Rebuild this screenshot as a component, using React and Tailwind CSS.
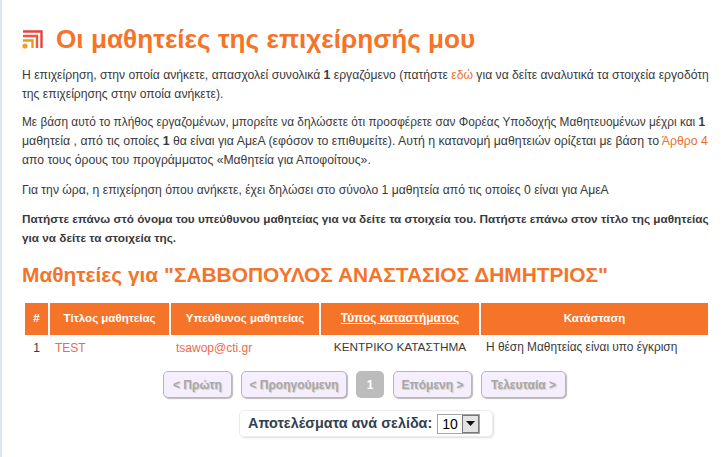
import React from 'react';

const RssIcon = () => (
  <svg width="22" height="20" viewBox="0 0 22 20" className="shrink-0">
    <path d="M1 2.5H19.5V19" fill="none" stroke="#e2453c" strokeWidth="2.4" />
    <path d="M1 7H15V19" fill="none" stroke="#ea5a3a" strokeWidth="2.4" />
    <path d="M1 11.5H10.5V19" fill="none" stroke="#ee9a1e" strokeWidth="2.4" />
    <circle cx="3" cy="17" r="2.6" fill="#f0a01e" />
  </svg>
);

const PageButton = ({ children, className }) => (
  <button className={`h-[27px] rounded-[5px] border border-[#b9b3c6] bg-[#f5eefc] text-xs font-bold text-[#a8a8a8] [text-shadow:1px_1px_1px_#ccc] shadow-[1px_1px_1px_#bbb] ${className}`}>
    {children}
  </button>
);

const headCell = 'bg-[#f5742a] text-white font-bold text-[11.5px] text-center h-8 flex items-center justify-center';

export default function App() {
  return (
    <div className="w-[721px] h-[457px] overflow-hidden bg-white border-l-2 border-[#dfe6ec] font-['Liberation_Sans',Arial,sans-serif] text-xs text-[#3a3a3a]">
      <div className="pl-5 pr-[9px] pt-[22px]">
        <div className="flex items-center gap-3 h-[34px]">
          <RssIcon />
          <h1 className="text-[26.2px] font-bold text-[#f5742a] whitespace-nowrap">Οι μαθητείες της επιχείρησής μου</h1>
        </div>

        <p className="mt-[10px] text-[12.18px] leading-[19px]">
          Η επιχείρηση, στην οποία ανήκετε, απασχολεί συνολικά <b>1</b> εργαζόμενο (πατήστε <span className="text-[#e8702a]">εδώ</span> για να δείτε αναλυτικά τα στοιχεία εργοδότη της επιχείρησης στην οποία ανήκετε).
        </p>
        <p className="mt-[9px] text-[12.2px] leading-[19px]">
          <span className="text-[11.85px]">Με βάση αυτό το πλήθος εργαζομένων, μπορείτε να δηλώσετε ότι προσφέρετε σαν Φορέας Υποδοχής Μαθητευομένων μέχρι και <b>1</b></span><br />
          <span className="text-[12.32px]">μαθητεία , από τις οποίες <b>1</b> θα είναι για ΑμεΑ (εφόσον το επιθυμείτε). Αυτή η κατανομή μαθητειών ορίζεται με βάση το <span className="text-[#e8702a]">Άρθρο 4</span></span><br />
          απο τους όρους του προγράμματος «Μαθητεία για Αποφοίτους».
        </p>
        <p className="mt-[11px] text-[12.18px] leading-[19px]">
          Για την ώρα, η επιχείρηση όπου ανήκετε, έχει δηλώσει στο σύνολο 1 μαθητεία από τις οποίες 0 είναι για ΑμεΑ
        </p>
        <p className="mt-[9px] text-[11.75px] leading-[19px] font-bold">
          Πατήστε επάνω στό όνομα του υπεύθυνου μαθητείας για να δείτε τα στοιχεία του. Πατήστε επάνω στον τίτλο της μαθητείας για να δείτε τα στοιχεία της.
        </p>

        <h2 className="mt-4 text-[20.9px] leading-6 font-bold text-[#f5742a] whitespace-nowrap">Μαθητείες για "ΣΑΒΒΟΠΟΥΛΟΣ ΑΝΑΣΤΑΣΙΟΣ ΔΗΜΗΤΡΙΟΣ"</h2>

        <div className="mt-4 ml-[3px] w-[683px] grid grid-cols-[23px_119px_148px_158px_227px] gap-x-[2px]">
          <div className={headCell}>#</div>
          <div className={headCell}>Τίτλος μαθητείας</div>
          <div className={headCell}>Υπεύθυνος μαθητείας</div>
          <div className={`${headCell} !text-[11.9px] underline`}>Τύπος καταστήματος</div>
          <div className={headCell}>Κατάσταση</div>

          <div className="h-[26px] flex items-center justify-center">1</div>
          <div className="h-[26px] flex items-center pl-[5px] text-[#ee6a4a]">TEST</div>
          <div className="h-[26px] flex items-center pl-[5px] text-[#ee6a4a]">tsawop@cti.gr</div>
          <div className="h-[26px] flex items-center justify-center text-[11.8px]">ΚΕΝΤΡΙΚΟ ΚΑΤΑΣΤΗΜΑ</div>
          <div className="h-[26px] flex items-center pl-[5px] text-[11.9px]">Η θέση Μαθητείας είναι υπο έγκριση</div>
        </div>

        <div className="mt-[10px] ml-[141px] flex gap-[9px]">
          <PageButton className="w-[69px]">&lt; Πρώτη</PageButton>
          <PageButton className="w-[106px]">&lt; Προηγούμενη</PageButton>
          <button className="h-[27px] w-7 rounded-[5px] bg-[#bcbcbc] text-xs font-bold text-white">1</button>
          <PageButton className="w-[79px]">Επόμενη &gt;</PageButton>
          <PageButton className="w-[85px]">Τελευταία &gt;</PageButton>
        </div>

        <div className="mt-3 ml-[217px] w-[254px] h-[27px] flex items-center pl-2 gap-[5px] rounded-[5px] border border-[#ececec] shadow-[1px_1px_2px_#ddd]">
          <span className="text-[14.4px] font-bold text-[#34404f] whitespace-nowrap">Αποτελέσματα ανά σελίδα:</span>
          <div className="w-[43px] h-5 flex items-center justify-between border border-[#a5a5a5] pl-[4px] text-sm text-black">
            <span>10</span>
            <span className="w-[17px] h-[18px] flex items-center justify-center bg-[#e4e4e4] border border-[#777]">
              <svg width="9" height="5" viewBox="0 0 9 5"><path d="M0 0H9L4.5 5Z" fill="#111" /></svg>
            </span>
          </div>
        </div>
      </div>
    </div>
  );
}
